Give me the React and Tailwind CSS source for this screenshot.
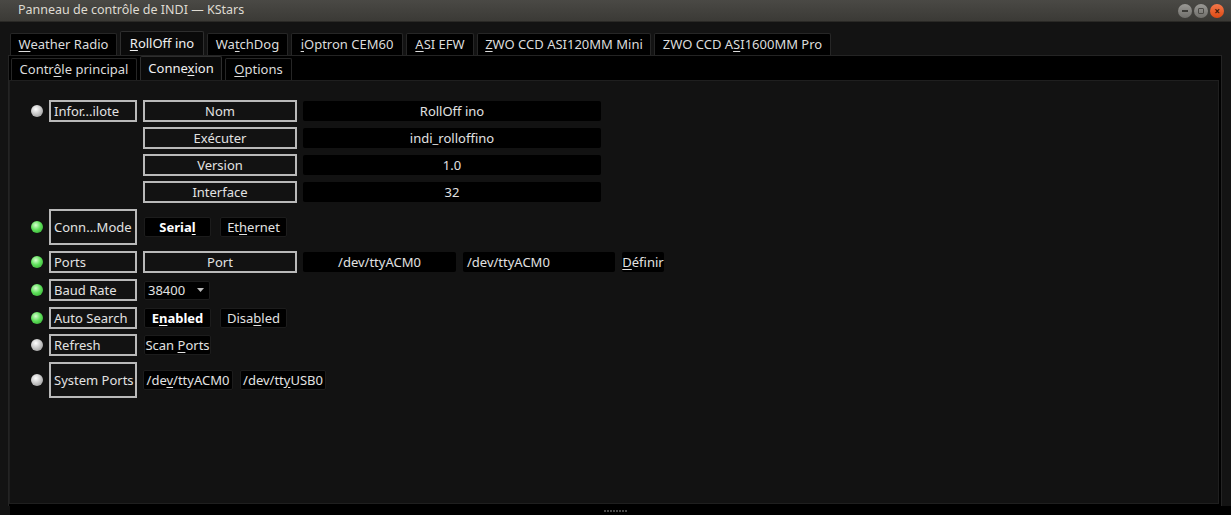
import React from "react";

const F = "font-['Noto_Sans',sans-serif]";

function U({ children }) {
  return <span className="underline underline-offset-2 decoration-1">{children}</span>;
}

function Led({ on }) {
  return (
    <div
      className={
        "w-[12px] h-[12px] rounded-full shrink-0 " +
        (on
          ? "bg-[radial-gradient(circle_at_40%_35%,#d8ffd0,#5ee05a_45%,#2c9e2a_100%)]"
          : "bg-[radial-gradient(circle_at_40%_35%,#ffffff,#c4c4c4_50%,#8a8a8a_100%)]")
      }
    />
  );
}

function Label({ children, tall }) {
  return (
    <div
      className={
        "w-[88px] shrink-0 border-2 border-[#b9b9b9] flex items-center px-[3px] text-[#e2e2e2] whitespace-nowrap " +
        (tall ? "h-[36px]" : "h-[22px]")
      }
    >
      {children}
    </div>
  );
}

function Btn({ children, w = "w-[154px]" }) {
  return (
    <div className={w + " h-[22px] shrink-0 border-2 border-[#b9b9b9] flex items-center justify-center text-[#e2e2e2]"}>
      {children}
    </div>
  );
}

function Val({ children, w = "w-[298px]", left }) {
  return (
    <div
      className={
        w +
        " h-[20px] shrink-0 bg-black rounded-[2px] flex items-center text-[#e2e2e2] " +
        (left ? "justify-start pl-[4px]" : "justify-center")
      }
    >
      {children}
    </div>
  );
}

function Chip({ children, w, bold }) {
  return (
    <div
      className={
        w +
        " h-[20px] shrink-0 bg-black rounded-[2px] border border-[#1c1c1c] flex items-center justify-center whitespace-pre " +
        (bold ? "font-bold text-white" : "text-[#e2e2e2]")
      }
    >
      <span>{children}</span>
    </div>
  );
}

function Tab({ children, w, active }) {
  return (
    <div
      className={
        w +
        " shrink-0 flex items-center justify-center border border-b-0 rounded-t-[2px] " +
        (active
          ? "h-[24px] bg-[#0a0a0a] border-[#2e2e2e] text-[#f0f0f0]"
          : "h-[22px] bg-black border-[#262626] text-[#dcdcdc]")
      }
    >
      <span>{children}</span>
    </div>
  );
}

export default function App() {
  return (
    <div className={F + " w-[1231px] h-[515px] bg-[#131313] text-[13px] leading-none flex flex-col overflow-hidden"}>
      {/* Title bar */}
      <div className="h-[22px] shrink-0 bg-[linear-gradient(#4a4945,#3b3a36)] flex items-center px-[18px] border-b border-[#2a2926]">
        <div className="text-[#dfdbd2] text-[12.5px]">Panneau de contrôle de INDI — KStars</div>
        <div className="ml-auto flex items-center gap-[2px] mr-[-11px]">
          <div className="w-[14px] h-[14px] rounded-full bg-[linear-gradient(#9a9995,#6f6e6a)] flex items-center justify-center">
            <div className="w-[6px] h-[2px] bg-[#3c3b37]" />
          </div>
          <div className="w-[14px] h-[14px] rounded-full bg-[linear-gradient(#9a9995,#6f6e6a)] flex items-center justify-center">
            <div className="w-[6px] h-[6px] border border-[#4a4945] rounded-[1px]" />
          </div>
          <div className="w-[14px] h-[14px] rounded-full bg-[linear-gradient(#f5784a,#dd4a14)] flex items-center justify-center text-[#3a1a0a] text-[10px] font-bold">
            ×
          </div>
        </div>
      </div>

      {/* Outer tabs */}
      <div className="mt-[9px] pl-[10px] flex items-end gap-[3px] h-[24px] shrink-0">
        <Tab w="w-[107px]"><U>W</U>eather Radio</Tab>
        <Tab w="w-[84px]" active><U>R</U>ollOff ino</Tab>
        <Tab w="w-[81px]">Wa<U>t</U>chDog</Tab>
        <Tab w="w-[112px]"><U>i</U>Optron CEM60</Tab>
        <Tab w="w-[68px]"><U>A</U>SI EFW</Tab>
        <Tab w="w-[174px]"><U>Z</U>WO CCD ASI120MM Mini</Tab>
        <Tab w="w-[177px]">ZWO CCD A<U>S</U>I1600MM Pro</Tab>
      </div>

      {/* Outer pane */}
      <div className="mx-[8px] w-[1214px] flex-1 flex flex-col bg-black border border-[#242424] border-b-0">
        {/* Inner tabs */}
        <div className="pl-[2px] flex items-end gap-[3px] h-[24px] shrink-0">
          <Tab w="w-[126px]">Contr<U>ô</U>le principal</Tab>
          <Tab w="w-[82px]" active>Conne<U>x</U>ion</Tab>
          <Tab w="w-[67px]"><U>O</U>ptions</Tab>
        </div>
        {/* Inner pane */}
        <div className="mr-[2px] flex-1 bg-[#121212] border border-[#1f1f1f] pl-[21px] pt-[19px] flex flex-col">
          {/* Driver info */}
          <div className="flex items-start gap-[6px]">
            <div className="h-[22px] flex items-center"><Led /></div>
            <Label>Infor...ilote</Label>
            <div className="flex flex-col gap-[5px]">
              <div className="flex items-center gap-[6px]"><Btn>Nom</Btn><Val>RollOff ino</Val></div>
              <div className="flex items-center gap-[6px]"><Btn>Exécuter</Btn><Val>indi_rolloffino</Val></div>
              <div className="flex items-center gap-[6px]"><Btn>Version</Btn><Val>1.0</Val></div>
              <div className="flex items-center gap-[6px]"><Btn>Interface</Btn><Val>32</Val></div>
            </div>
          </div>

          {/* Connection Mode */}
          <div className="mt-[6px] flex items-center gap-[6px]">
            <Led on />
            <Label tall>Conn...Mode</Label>
            <div className="flex items-center gap-[9px] ml-[1px]">
              <Chip w="w-[67px]" bold>Seria<U>l</U></Chip>
              <Chip w="w-[67px]">Et<U>h</U>ernet</Chip>
            </div>
          </div>

          {/* Ports */}
          <div className="mt-[6px] flex items-center gap-[6px]">
            <Led on />
            <Label>Ports</Label>
            <Btn>Port</Btn>
            <Val w="w-[153px]">/dev/ttyACM0</Val>
            <div className="ml-[1px]"><Val w="w-[152px]" left>/dev/ttyACM0</Val></div>
            <div className="ml-[1px] w-[42px] h-[20px] bg-black rounded-[2px] flex items-center justify-center text-[#e2e2e2]">
              <span><U>D</U>éfinir</span>
            </div>
          </div>

          {/* Baud rate */}
          <div className="mt-[6px] flex items-center gap-[6px]">
            <Led on />
            <Label>Baud Rate</Label>
            <div className="ml-[1px] w-[66px] h-[19px] bg-black rounded-[2px] border border-[#1c1c1c] flex items-center pl-[3px] text-[#e2e2e2]">
              38400
              <svg className="ml-auto mr-[5px]" width="7" height="4" viewBox="0 0 7 4">
                <path d="M0 0 L7 0 L3.5 4 Z" fill="#bdbdbd" />
              </svg>
            </div>
          </div>

          {/* Auto Search */}
          <div className="mt-[6px] flex items-center gap-[6px]">
            <Led on />
            <Label>Auto Search</Label>
            <div className="flex items-center gap-[9px] ml-[1px]">
              <Chip w="w-[67px]" bold>E<U>n</U>abled</Chip>
              <Chip w="w-[67px]">Disa<U>b</U>led</Chip>
            </div>
          </div>

          {/* Refresh */}
          <div className="mt-[5px] flex items-center gap-[6px]">
            <Led />
            <Label>Refresh</Label>
            <div className="ml-[1px]"><Chip w="w-[67px]">Scan <U>P</U>orts</Chip></div>
          </div>

          {/* System Ports */}
          <div className="mt-[6px] flex items-center gap-[6px]">
            <Led />
            <Label tall>System Ports</Label>
            <div className="flex items-center gap-[7px]">
              <Chip w="w-[90px]">/de<U>v</U>/ttyACM0</Chip>
              <Chip w="w-[86px]">/dev/tt<U>y</U>USB0</Chip>
            </div>
          </div>
        </div>
        <div className="h-[2px] shrink-0" />
      </div>

      {/* Bottom splitter */}
      <div className="h-[9px] shrink-0 bg-black ml-[10px] flex items-center justify-center">
        <div className="flex gap-[1px] ml-[-10px]">
          {[0, 1, 2, 3, 4, 5, 6, 7].map((i) => (
            <div key={i} className="w-[2px] h-[2px] bg-[#4a4a4a]" />
          ))}
        </div>
      </div>
    </div>
  );
}
